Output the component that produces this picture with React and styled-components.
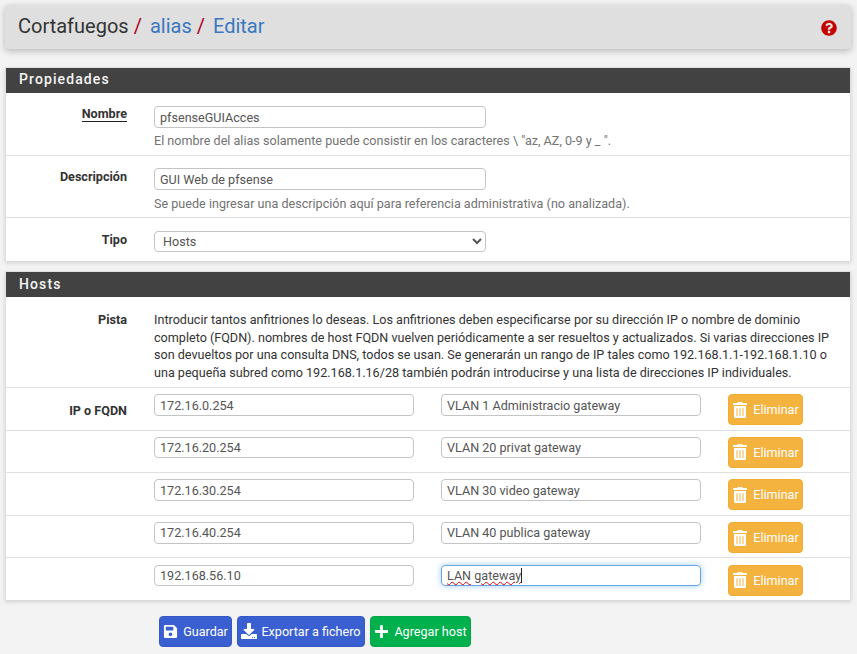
import React from "react";
import styled, { createGlobalStyle } from "styled-components";
import { FaQuestionCircle, FaSave, FaDownload, FaPlus, FaTrashAlt } from "react-icons/fa";

const Global = createGlobalStyle`
  html, body { margin: 0; padding: 0; background: #f3f3f3; }
  body { font-family: Roboto, "Liberation Sans", sans-serif; font-size: 12.6px; color: #424242; height: 654px; overflow: hidden; }
  * { box-sizing: border-box; }
`;

const Page = styled.div`
  width: 857px;
  padding: 5px 6px 0 5px;
  display: flex;
  flex-direction: column;
`;
const Header = styled.header`
  height: 44px;
  background: #dfdfdf;
  border-radius: 4px;
  box-shadow: 0 2px 7px rgba(0, 0, 0, 0.25);
  display: flex;
  align-items: center;
  justify-content: space-between;
  padding: 0 14px 0 13px;
  margin-bottom: 18px;
`;
const Crumbs = styled.h1`
  margin: 0 0 2px;
  font-size: 20px;
  font-weight: 400;
  color: #333;
  display: flex;
  align-items: center;
`;
const Crumb = styled.span`
  color: ${(p) => (p.$link ? "#3a77bf" : "#333")};
`;
const Sep = styled.span`
  color: #b00020;
  margin: 0 ${(p) => p.$after}px 0 5px;
`;
const Help = styled.span`
  color: #c40000;
  font-size: 16px;
  display: flex;
  margin-top: 1px;
`;
const Panel = styled.section`
  background: #fff;
  border: 1px solid #e0e0e0;
  border-bottom: 0;
  box-shadow: 0 2px 4px rgba(0, 0, 0, 0.14);
  margin-bottom: ${(p) => p.$mb}px;
`;
const PanelTitle = styled.h2`
  margin: 0;
  height: 25px;
  line-height: ${(p) => p.$lh}px;
  background: #424242;
  color: #f5f5f5;
  font-size: 14px;
  font-weight: 500;
  letter-spacing: 1.1px;
  padding-left: 13px;
`;
const Row = styled.div`
  display: grid;
  grid-template-columns: 136px 1fr;
  min-height: ${(p) => p.$h}px;
  border-top: ${(p) => (p.$first ? "0" : "1px solid #e0e0e0")};
`;
const Label = styled.div`
  text-align: right;
  padding: ${(p) => p.$top}px 15px 0 0;
  font-weight: 700;
  font-size: 12.6px;
  line-height: 16px;
  color: #333;
`;
const LabelText = styled.span`
  border-bottom: ${(p) => (p.$u ? "1px solid #222" : "0")};
`;
const Field = styled.div`
  padding: ${(p) => p.$top}px 12px 0;
`;
const Input = styled.input`
  display: block;
  width: ${(p) => p.$w}px;
  height: ${(p) => p.$h ?? 22}px;
  border: 1px solid #c4c4c4;
  border-radius: 4px;
  background: #fff;
  padding: 0 5px;
  font: 400 12.6px Roboto, sans-serif;
  color: #555;
  outline: none;
`;
const Focused = styled.div`
  width: 260px;
  height: 21.5px;
  border: 1px solid #66a3e0;
  border-radius: 4px;
  box-shadow: 0 0 6px rgba(102, 175, 233, 0.6);
  padding: 0 5px;
  font: 400 12.6px/19px Roboto, sans-serif;
  color: #555;
  white-space: pre;
`;
const Misspelled = styled.span`
  text-decoration: underline wavy #e00000 1px;
  text-underline-offset: 1px;
`;
const Caret = styled.span`
  display: inline-block;
  width: 1px;
  height: 15px;
  vertical-align: -3px;
  background: #222;
`;
const Select = styled.select`
  display: block;
  width: 332px;
  height: 21px;
  border: 1px solid #c4c4c4;
  border-radius: 4px;
  background: #fff;
  padding: 0 4px;
  font: 400 12.6px Roboto, sans-serif;
  color: #555;
  outline: none;
`;
const Hint = styled.p`
  margin: ${(p) => p.$top}px 0 0;
  font-size: 12.6px;
  line-height: 15px;
  color: #737373;
`;
const Paragraph = styled.p`
  margin: 0;
  font-size: 12.6px;
  line-height: 17.6px;
  color: #333;
  width: 690px;
`;
const HostRow = styled.div`
  display: flex;
  align-items: flex-start;
  padding-top: 6.3px;
`;
const GapInput = styled.div`
  margin-right: 27px;
`;
const Btn = styled.button`
  display: inline-flex;
  align-items: center;
  justify-content: center;
  gap: ${(p) => p.$gap ?? 5}px;
  height: 31px;
  border: 1px solid ${(p) => p.$border};
  border-radius: 4px;
  background: ${(p) => p.$bg};
  color: #fff;
  font: 400 12.6px Roboto, sans-serif;
  padding: 0 3px;
  width: ${(p) => p.$w}px;
`;
const Actions = styled.div`
  display: flex;
  gap: 5px;
  padding: 7px 0 0 154px;
`;

const hosts = [
  ["172.16.0.254", "VLAN 1 Administracio gateway"],
  ["172.16.20.254", "VLAN 20 privat gateway"],
  ["172.16.30.254", "VLAN 30 video gateway"],
  ["172.16.40.254", "VLAN 40 publica gateway"],
];
const noop = () => {};

const Delete = () => (
  <Btn $bg="#f4b23f" $border="#f0ad2e" $w={75} $gap={5}>
    <FaTrashAlt size={16} color="#fff" />
    <span>Eliminar</span>
  </Btn>
);

export default function App() {
  return (
    <Page>
      <Global />
      <Header>
        <Crumbs>
          <Crumb>Cortafuegos</Crumb>
          <Sep $after={8}>/</Sep>
          <Crumb $link>alias</Crumb>
          <Sep $after={8}>/</Sep>
          <Crumb $link>Editar</Crumb>
        </Crumbs>
        <Help>
          <FaQuestionCircle />
        </Help>
      </Header>

      <Panel $mb={10}>
        <PanelTitle $lh={22}>Propiedades</PanelTitle>
        <Row $first $h={62}>
          <Label $top={13}>
            <LabelText $u>Nombre</LabelText>
          </Label>
          <Field $top={13}>
            <Input $w={332} value="pfsenseGUIAcces" onChange={noop} />
            <Hint $top={5}>El nombre del alias solamente puede consistir en los caracteres \ "az, AZ, 0-9 y _ ".</Hint>
          </Field>
        </Row>
        <Row $h={62}>
          <Label $top={13}>Descripción</Label>
          <Field $top={12}>
            <Input $w={332} value="GUI Web de pfsense" onChange={noop} />
            <Hint $top={6}>Se puede ingresar una descripción aquí para referencia administrativa (no analizada).</Hint>
          </Field>
        </Row>
        <Row $h={44}>
          <Label $top={14}>Tipo</Label>
          <Field $top={13}>
            <Select defaultValue="Hosts">
              <option>Hosts</option>
            </Select>
          </Field>
        </Row>
      </Panel>

      <Panel $mb={9}>
        <PanelTitle $lh={24}>Hosts</PanelTitle>
        <Row $first $h={90}>
          <Label $top={15}>Pista</Label>
          <Field $top={14}>
            <Paragraph>
              Introducir tantos anfitriones lo deseas. Los anfitriones deben especificarse por su dirección IP o nombre de dominio completo (FQDN). nombres de host FQDN vuelven periódicamente a ser resueltos y actualizados. Si varias direcciones IP son devueltos por una consulta DNS, todos se usan. Se generarán un rango de IP tales como 192.168.1.1-192.168.1.10 o una pequeña subred como 192.168.1.16/28 también podrán introducirse y una lista de direcciones IP individuales.
            </Paragraph>
          </Field>
        </Row>
        {hosts.map(([ip, desc], i) => (
          <Row key={ip} $h={42.6}>
            <Label $top={15}>{i === 0 ? "IP o FQDN" : ""}</Label>
            <Field $top={0}>
              <HostRow>
                <GapInput>
                  <Input $w={260} $h={21.5} value={ip} onChange={noop} />
                </GapInput>
                <GapInput>
                  <Input $w={260} $h={21.5} value={desc} onChange={noop} />
                </GapInput>
                <Delete />
              </HostRow>
            </Field>
          </Row>
        ))}
        <Row $h={42.6}>
          <Label $top={15} />
          <Field $top={0}>
            <HostRow>
              <GapInput>
                <Input $w={260} $h={21.5} value="192.168.56.10" onChange={noop} />
              </GapInput>
              <GapInput>
                <Focused>
                  <Misspelled>LAN</Misspelled>{" "}
                  <Misspelled>gateway</Misspelled>
                  <Caret />
                </Focused>
              </GapInput>
              <Delete />
            </HostRow>
          </Field>
        </Row>
      </Panel>

      <Actions>
        <Btn $bg="#3a5fd0" $border="#3558c4" $w={73}>
          <FaSave size={15} />
          <span>Guardar</span>
        </Btn>
        <Btn $bg="#3a5fd0" $border="#3558c4" $w={128} $gap={4}>
          <FaDownload size={16} />
          <span>Exportar a fichero</span>
        </Btn>
        <Btn $bg="#00b04c" $border="#00a846" $w={101} $gap={5}>
          <FaPlus size={15} />
          <span>Agregar host</span>
        </Btn>
      </Actions>
    </Page>
  );
}
